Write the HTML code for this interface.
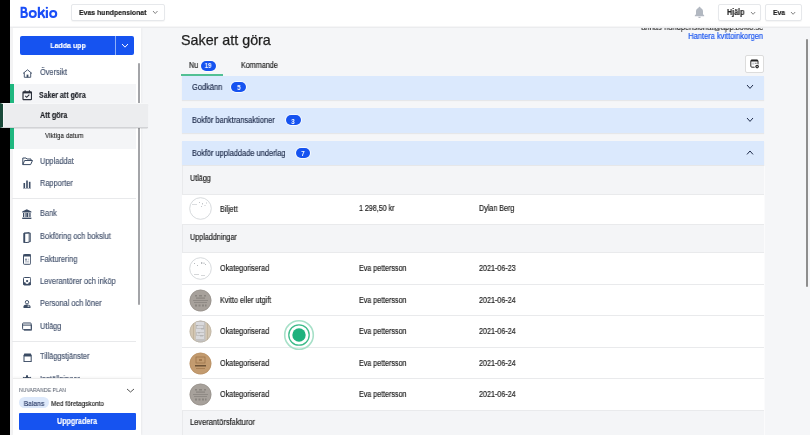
<!DOCTYPE html><html><head><meta charset="utf-8"><style>
html,body{margin:0;padding:0}
body{width:810px;height:435px;overflow:hidden;position:relative;background:#f5f6f8;font-family:"Liberation Sans",sans-serif}
.t{position:absolute;white-space:nowrap;will-change:transform}
.b{position:absolute;box-sizing:border-box}
</style></head><body>
<div class="t" style="right:46.90px;top:23.01px;font-size:8.625px;line-height:8.625px;color:#333;-webkit-text-stroke:0.18px #333;transform:scaleX(0.8696);transform-origin:100% 50%;">annas-hundpensionat@app.bokio.se</div>
<div class="t" style="right:46.90px;top:32.00px;font-size:8.625px;line-height:8.625px;color:#1653f0;-webkit-text-stroke:0.18px #1653f0;transform:scaleX(0.8696);transform-origin:100% 50%;">Hantera kvittoinkorgen</div>
<div class="t" style="left:181.40px;top:33.00px;font-size:14.300px;line-height:14.300px;color:#1e1e1e;transform-origin:0 50%;-webkit-text-stroke:0.25px #1e1e1e">Saker att göra</div>
<div class="t" style="left:189.00px;top:62.01px;font-size:8.165px;line-height:8.165px;color:#222;-webkit-text-stroke:0.18px #222;transform:scaleX(0.8696);transform-origin:0 50%;">Nu</div>
<div class="b" style="left:200.70px;top:60.50px;width:15.30px;height:10.10px;background:#1653f0;border-radius:5px;box-shadow:0 0 0 0.8px #fff"></div>
<div class="t" style="left:8.35px;width:400px;text-align:center;top:63.01px;font-size:6.900px;line-height:6.900px;color:#fff;font-weight:bold;-webkit-text-stroke:0.15px #fff;transform:scaleX(0.8696);transform-origin:50% 50%;-webkit-text-stroke:0">19</div>
<div class="t" style="left:240.80px;top:62.00px;font-size:8.280px;line-height:8.280px;color:#222;-webkit-text-stroke:0.18px #222;transform:scaleX(0.8696);transform-origin:0 50%;">Kommande</div>
<div class="b" style="left:181.40px;top:73.80px;width:41.90px;height:2.00px;background:#52c094"></div>
<div class="b" style="left:745.00px;top:55.00px;width:19.00px;height:18.30px;background:#fff;border:1px solid #dcdcdc;border-radius:2px"></div>
<svg class="b" style="left:749.50px;top:59.00px" width="11" height="11" viewBox="0 0 11 11"><rect x="0.8" y="1.1" width="7.2" height="7.1" rx="1" fill="none" stroke="#222" stroke-width="0.95"/><rect x="0.8" y="0.8" width="7.2" height="1.7" rx="0.6" fill="#222"/><rect x="2.2" y="3.6" width="2.2" height="2" fill="#c8cbd0"/><rect x="4.9" y="3.8" width="1.8" height="0.8" fill="#555"/><circle cx="7.1" cy="7.6" r="2.6" fill="#fff"/><circle cx="7.1" cy="7.6" r="1.8" fill="#222"/><circle cx="7.1" cy="7.6" r="0.6" fill="#fff"/></svg>
<div class="b" style="left:181.50px;top:76.00px;width:582.20px;height:24.00px;background:#dbe9fd;box-shadow:0 1px 1px rgba(0,0,0,0.06)"></div>
<div class="t" style="left:192.00px;top:83.00px;font-size:8.567px;line-height:8.567px;color:#1e2b4a;-webkit-text-stroke:0.18px #1e2b4a;transform:scaleX(0.8696);transform-origin:0 50%;">Godkänn</div>
<div class="b" style="left:231.20px;top:82.40px;width:14.80px;height:9.50px;background:#1653f0;border-radius:5px;box-shadow:0 0 0 0.8px #fff"></div>
<div class="t" style="left:38.60px;width:400px;text-align:center;top:85.00px;font-size:6.900px;line-height:6.900px;color:#fff;font-weight:bold;-webkit-text-stroke:0.15px #fff;transform:scaleX(0.8696);transform-origin:50% 50%;-webkit-text-stroke:0">5</div>
<svg class="b" style="left:746.00px;top:84.00px" width="8" height="5.4" viewBox="0 0 8 5.4"><polyline points="1,1 4.0,4.4 7,1" fill="none" stroke="#1e2b4a" stroke-width="1.0"/></svg>
<div class="b" style="left:181.50px;top:108.00px;width:582.20px;height:25.00px;background:#dbe9fd;box-shadow:0 1px 1px rgba(0,0,0,0.06)"></div>
<div class="t" style="left:192.00px;top:116.00px;font-size:8.567px;line-height:8.567px;color:#1e2b4a;-webkit-text-stroke:0.18px #1e2b4a;transform:scaleX(0.8696);transform-origin:0 50%;">Bokför banktransaktioner</div>
<div class="b" style="left:285.70px;top:115.40px;width:14.90px;height:9.50px;background:#1653f0;border-radius:5px;box-shadow:0 0 0 0.8px #fff"></div>
<div class="t" style="left:93.15px;width:400px;text-align:center;top:119.00px;font-size:6.900px;line-height:6.900px;color:#fff;font-weight:bold;-webkit-text-stroke:0.15px #fff;transform:scaleX(0.8696);transform-origin:50% 50%;-webkit-text-stroke:0">3</div>
<svg class="b" style="left:746.00px;top:117.00px" width="8" height="5.4" viewBox="0 0 8 5.4"><polyline points="1,1 4.0,4.4 7,1" fill="none" stroke="#1e2b4a" stroke-width="1.0"/></svg>
<div class="b" style="left:181.50px;top:141.30px;width:582.20px;height:24.20px;background:#dbe9fd;box-shadow:0 1px 1px rgba(0,0,0,0.06)"></div>
<div class="t" style="left:192.00px;top:149.00px;font-size:8.567px;line-height:8.567px;color:#1e2b4a;-webkit-text-stroke:0.18px #1e2b4a;transform:scaleX(0.8696);transform-origin:0 50%;">Bokför uppladdade underlag</div>
<div class="b" style="left:296.00px;top:148.20px;width:14.40px;height:9.50px;background:#1653f0;border-radius:5px;box-shadow:0 0 0 0.8px #fff"></div>
<div class="t" style="left:103.20px;width:400px;text-align:center;top:151.01px;font-size:6.900px;line-height:6.900px;color:#fff;font-weight:bold;-webkit-text-stroke:0.15px #fff;transform:scaleX(0.8696);transform-origin:50% 50%;-webkit-text-stroke:0">7</div>
<svg class="b" style="left:746.00px;top:149.80px" width="8" height="5.4" viewBox="0 0 8 5.4"><polyline points="1,4.4 4.0,1 7,4.4" fill="none" stroke="#1e2b4a" stroke-width="1.0"/></svg>
<div class="b" style="left:181.50px;top:165.50px;width:582.20px;height:269.50px;background:#f4f5f7;border-left:1px solid #e9eaec;box-shadow:1px 0 0 #fbfbfc"></div>
<div class="t" style="left:190.00px;top:175.01px;font-size:8.280px;line-height:8.280px;color:#222;-webkit-text-stroke:0.18px #222;transform:scaleX(0.8696);transform-origin:0 50%;">Utlägg</div>
<div class="b" style="left:181.50px;top:193.60px;width:582.20px;height:31.70px;background:#fff;border-bottom:1px solid #e9eaec;border-top:1px solid #e9eaec"></div>
<div class="t" style="left:220.30px;top:206.00px;font-size:8.280px;line-height:8.280px;color:#222;-webkit-text-stroke:0.18px #222;transform:scaleX(0.8696);transform-origin:0 50%;">Biljett</div>
<div class="t" style="left:359.40px;top:205.00px;font-size:8.165px;line-height:8.165px;color:#222;-webkit-text-stroke:0.18px #222;transform:scaleX(0.8696);transform-origin:0 50%;">1 298,50 kr</div>
<div class="t" style="left:478.90px;top:205.00px;font-size:8.223px;line-height:8.223px;color:#222;-webkit-text-stroke:0.18px #222;transform:scaleX(0.8696);transform-origin:0 50%;">Dylan Berg</div>
<svg class="b" style="left:189.30px;top:197.40px" width="23" height="23" viewBox="0 0 23 23"><circle cx="11.5" cy="11.5" r="10.8" fill="#fff" stroke="#cdd0d4" stroke-width="0.8"/><g fill="#c4c7cb"><rect x="3" y="7" width="5" height="0.6"/><rect x="10" y="5" width="1" height="1"/><rect x="13" y="6" width="1" height="1.5"/><rect x="15.5" y="8" width="1" height="1"/><rect x="12" y="9" width="1" height="1"/><rect x="17" y="5.5" width="1" height="1"/></g></svg>
<div class="t" style="left:190.00px;top:234.01px;font-size:8.280px;line-height:8.280px;color:#222;-webkit-text-stroke:0.18px #222;transform:scaleX(0.8696);transform-origin:0 50%;">Uppladdningar</div>
<div class="b" style="left:181.50px;top:252.40px;width:582.20px;height:32.46px;background:#fff;border-top:1px solid #e9eaec;border-bottom:1px solid #e9eaec"></div>
<svg class="b" style="left:189.30px;top:257.23px" width="23" height="23" viewBox="0 0 23 23"><circle cx="11.5" cy="11.5" r="10.8" fill="#fff" stroke="#cdd0d4" stroke-width="0.8"/><g fill="#b9bcc0"><rect x="5" y="6" width="1" height="1"/><rect x="8" y="8" width="1" height="1"/><rect x="12" y="5" width="1.3" height="2"/><rect x="14.5" y="5.5" width="1" height="1.5"/><rect x="16" y="7" width="1" height="1"/><rect x="5" y="17" width="5" height="0.6"/><rect x="12" y="18" width="4" height="0.6"/></g></svg>
<div class="t" style="left:220.30px;top:265.01px;font-size:8.280px;line-height:8.280px;color:#222;-webkit-text-stroke:0.18px #222;transform:scaleX(0.8696);transform-origin:0 50%;">Okategoriserad</div>
<div class="t" style="left:359.40px;top:265.01px;font-size:8.188px;line-height:8.188px;color:#222;-webkit-text-stroke:0.18px #222;transform:scaleX(0.8696);transform-origin:0 50%;">Eva pettersson</div>
<div class="t" style="left:478.90px;top:265.01px;font-size:8.257px;line-height:8.257px;color:#222;-webkit-text-stroke:0.18px #222;transform:scaleX(0.8696);transform-origin:0 50%;">2021-06-23</div>
<div class="b" style="left:181.50px;top:283.86px;width:582.20px;height:32.46px;background:#fff;border-top:1px solid #e9eaec;border-bottom:1px solid #e9eaec"></div>
<svg class="b" style="left:189.30px;top:288.69px" width="23" height="23" viewBox="0 0 23 23"><circle cx="11.5" cy="11.5" r="10.8" fill="#a7a19b"/><g fill="#8a8580"><rect x="6" y="6" width="2" height="1.5"/><rect x="10" y="6" width="3" height="1.5"/><rect x="15" y="6" width="2" height="1.5"/><rect x="7" y="8.5" width="9" height="1.2"/><rect x="4" y="11" width="15" height="0.8"/><rect x="5" y="13" width="13" height="0.8"/><rect x="6" y="15.5" width="2" height="2"/><rect x="9.5" y="15.5" width="2" height="2"/><rect x="13" y="15.5" width="2" height="2"/><rect x="16" y="15.5" width="1.5" height="2"/></g><circle cx="11.5" cy="11.5" r="10.6" fill="none" stroke="#8e8983" stroke-width="0.5"/></svg>
<div class="t" style="left:220.30px;top:297.02px;font-size:8.280px;line-height:8.280px;color:#222;-webkit-text-stroke:0.18px #222;transform:scaleX(0.8696);transform-origin:0 50%;">Kvitto eller utgift</div>
<div class="t" style="left:359.40px;top:297.00px;font-size:8.188px;line-height:8.188px;color:#222;-webkit-text-stroke:0.18px #222;transform:scaleX(0.8696);transform-origin:0 50%;">Eva pettersson</div>
<div class="t" style="left:478.90px;top:297.00px;font-size:8.257px;line-height:8.257px;color:#222;-webkit-text-stroke:0.18px #222;transform:scaleX(0.8696);transform-origin:0 50%;">2021-06-24</div>
<div class="b" style="left:181.50px;top:315.32px;width:582.20px;height:32.46px;background:#fff;border-top:1px solid #e9eaec;border-bottom:1px solid #e9eaec"></div>
<svg class="b" style="left:189.30px;top:320.15px" width="23" height="23" viewBox="0 0 23 23"><defs><clipPath id="c3"><circle cx="11.5" cy="11.5" r="10.8"/></clipPath></defs><g clip-path="url(#c3)"><rect width="23" height="23" fill="#d3c6b2"/><rect x="6.5" y="0" width="10" height="23" fill="#c3c2c2"/><g fill="#d9d9dc"><rect x="7" y="2" width="8" height="3"/><rect x="8" y="6" width="6" height="2"/><rect x="7" y="9" width="8" height="3"/><rect x="8" y="13" width="7" height="2"/><rect x="7" y="16" width="8" height="3"/></g><g fill="#a9a8a7"><rect x="7" y="5" width="2" height="0.8"/><rect x="12" y="8.5" width="3" height="0.8"/><rect x="9" y="12.5" width="2" height="0.8"/><rect x="11" y="15.5" width="3" height="0.8"/></g><rect x="4" y="0" width="1" height="23" fill="#c2b49e"/><rect x="18" y="0" width="1" height="23" fill="#c2b49e"/></g><circle cx="11.5" cy="11.5" r="10.6" fill="none" stroke="#b9b0a3" stroke-width="0.6"/></svg>
<div class="t" style="left:220.30px;top:328.01px;font-size:8.280px;line-height:8.280px;color:#222;-webkit-text-stroke:0.18px #222;transform:scaleX(0.8696);transform-origin:0 50%;">Okategoriserad</div>
<div class="t" style="left:359.40px;top:328.01px;font-size:8.188px;line-height:8.188px;color:#222;-webkit-text-stroke:0.18px #222;transform:scaleX(0.8696);transform-origin:0 50%;">Eva pettersson</div>
<div class="t" style="left:478.90px;top:328.01px;font-size:8.257px;line-height:8.257px;color:#222;-webkit-text-stroke:0.18px #222;transform:scaleX(0.8696);transform-origin:0 50%;">2021-06-24</div>
<div class="b" style="left:181.50px;top:346.78px;width:582.20px;height:32.46px;background:#fff;border-top:1px solid #e9eaec;border-bottom:1px solid #e9eaec"></div>
<svg class="b" style="left:189.30px;top:351.61px" width="23" height="23" viewBox="0 0 23 23"><circle cx="11.5" cy="11.5" r="10.8" fill="#c39b6f"/><g fill="#a37a4f"><rect x="7" y="5" width="9" height="6" fill="none" stroke="#9c744b" stroke-width="0.8"/><rect x="10" y="7" width="3" height="2"/><rect x="6" y="13" width="11" height="1.5" fill="#6d5236"/><rect x="7" y="16" width="9" height="0.8"/></g><circle cx="11.5" cy="11.5" r="10.6" fill="none" stroke="#b28a5e" stroke-width="0.5"/></svg>
<div class="t" style="left:220.30px;top:360.01px;font-size:8.280px;line-height:8.280px;color:#222;-webkit-text-stroke:0.18px #222;transform:scaleX(0.8696);transform-origin:0 50%;">Okategoriserad</div>
<div class="t" style="left:359.40px;top:360.01px;font-size:8.188px;line-height:8.188px;color:#222;-webkit-text-stroke:0.18px #222;transform:scaleX(0.8696);transform-origin:0 50%;">Eva pettersson</div>
<div class="t" style="left:478.90px;top:360.00px;font-size:8.257px;line-height:8.257px;color:#222;-webkit-text-stroke:0.18px #222;transform:scaleX(0.8696);transform-origin:0 50%;">2021-06-24</div>
<div class="b" style="left:181.50px;top:378.24px;width:582.20px;height:32.46px;background:#fff;border-top:1px solid #e9eaec;border-bottom:1px solid #e9eaec"></div>
<svg class="b" style="left:189.30px;top:383.07px" width="23" height="23" viewBox="0 0 23 23"><circle cx="11.5" cy="11.5" r="10.8" fill="#a7a19b"/><g fill="#8a8580"><rect x="6" y="6" width="2" height="1.5"/><rect x="10" y="6" width="3" height="1.5"/><rect x="15" y="6" width="2" height="1.5"/><rect x="7" y="8.5" width="9" height="1.2"/><rect x="4" y="11" width="15" height="0.8"/><rect x="5" y="13" width="13" height="0.8"/><rect x="6" y="15.5" width="2" height="2"/><rect x="9.5" y="15.5" width="2" height="2"/><rect x="13" y="15.5" width="2" height="2"/><rect x="16" y="15.5" width="1.5" height="2"/></g><circle cx="11.5" cy="11.5" r="10.6" fill="none" stroke="#8e8983" stroke-width="0.5"/></svg>
<div class="t" style="left:220.30px;top:391.00px;font-size:8.280px;line-height:8.280px;color:#222;-webkit-text-stroke:0.18px #222;transform:scaleX(0.8696);transform-origin:0 50%;">Okategoriserad</div>
<div class="t" style="left:359.40px;top:391.00px;font-size:8.188px;line-height:8.188px;color:#222;-webkit-text-stroke:0.18px #222;transform:scaleX(0.8696);transform-origin:0 50%;">Eva pettersson</div>
<div class="t" style="left:478.90px;top:391.01px;font-size:8.257px;line-height:8.257px;color:#222;-webkit-text-stroke:0.18px #222;transform:scaleX(0.8696);transform-origin:0 50%;">2021-06-24</div>
<div class="t" style="left:190.00px;top:418.00px;font-size:8.625px;line-height:8.625px;color:#222;-webkit-text-stroke:0.18px #222;transform:scaleX(0.8696);transform-origin:0 50%;">Leverantörsfakturor</div>
<div class="b" style="left:806.00px;top:39.20px;width:2.30px;height:247.80px;background:#8e8e8e;border-radius:1px"></div>
<svg class="b" style="left:283.40px;top:319.00px" width="32" height="32" viewBox="0 0 32 32"><circle cx="16" cy="16" r="14.3" fill="none" stroke="#a7e0c8" stroke-width="1.6"/><circle cx="16" cy="16" r="10.2" fill="none" stroke="#3dbb8a" stroke-width="1.3"/><circle cx="16" cy="16" r="6.7" fill="#1db27d"/></svg>
<div class="b" style="left:10.00px;top:0.00px;width:800.00px;height:26.00px;background:#fff"></div>
<div class="b" style="left:10.00px;top:26.00px;width:800.00px;height:1.00px;background:#f6f6f7"></div>
<svg class="b" style="left:0.00px;top:0.00px" width="70" height="26" viewBox="0 0 70 26"><g fill="none" stroke="#1a4ef7" stroke-width="2"><path d="M21.6 6.8V18M21.6 7.8H23.9A2.1 2.1 0 0 1 23.9 12H21.6M21.6 12H24.4A2.5 2.5 0 0 1 24.4 17H21.6"/></g><g fill="none" stroke="#1a4ef7" stroke-width="2.1"><circle cx="32.75" cy="13.95" r="3.0"/><circle cx="53.2" cy="13.95" r="3.0"/></g><rect x="37.8" y="6.8" width="2.15" height="11.2" fill="#1a4ef7"/><path d="M39.6 14.4 44.4 9.9M41.3 12.6 44.7 18" fill="none" stroke="#1a4ef7" stroke-width="2.2"/><rect x="45.75" y="10.1" width="2.2" height="7.9" fill="#1a4ef7"/><circle cx="46.85" cy="7.85" r="1.15" fill="#1a4ef7"/></svg>
<div class="b" style="left:71.00px;top:4.00px;width:94.00px;height:17.00px;background:#fff;border:1px solid #e6e8eb;border-radius:2px;box-shadow:0 1px 1px rgba(0,0,0,0.04)"></div>
<div class="t" style="left:79.30px;top:9.02px;font-size:7.958px;line-height:7.958px;color:#222;font-weight:bold;-webkit-text-stroke:0.15px #222;transform:scaleX(0.8696);transform-origin:0 50%;">Evas hundpensionat</div>
<svg class="b" style="left:152.00px;top:10.00px" width="6.5" height="4.5" viewBox="0 0 6.5 4.5"><polyline points="1,1 3.25,3.5 5.5,1" fill="none" stroke="#666" stroke-width="0.8"/></svg>
<svg class="b" style="left:694.00px;top:5.80px" width="11" height="12" viewBox="0 0 11 12"><path d="M5.5 0.8c-0.6 0-1 0.4-1 0.9v0.4C2.9 2.5 2 3.9 2 5.6v2.6L0.8 9.6v0.6h9.4V9.6L9 8.2V5.6C9 3.9 8.1 2.5 6.5 2.1V1.7c0-0.5-0.4-0.9-1-0.9z" fill="#b2b8c1"/><path d="M4.2 10.7h2.6a1.3 1.3 0 0 1-2.6 0z" fill="#b2b8c1"/></svg>
<div class="b" style="left:718.00px;top:4.00px;width:43.00px;height:17.00px;background:#fff;border:1px solid #e6e8eb;border-radius:2px;box-shadow:0 1px 1px rgba(0,0,0,0.04)"></div>
<div class="t" style="left:726.50px;top:9.01px;font-size:8.165px;line-height:8.165px;color:#222;font-weight:bold;-webkit-text-stroke:0.15px #222;transform:scaleX(0.8696);transform-origin:0 50%;">Hjälp</div>
<svg class="b" style="left:749.60px;top:10.50px" width="6.2" height="4.3" viewBox="0 0 6.2 4.3"><polyline points="1,1 3.1,3.3 5.2,1" fill="none" stroke="#666" stroke-width="0.8"/></svg>
<div class="b" style="left:765.00px;top:4.00px;width:37.00px;height:17.00px;background:#fff;border:1px solid #e6e8eb;border-radius:2px;box-shadow:0 1px 1px rgba(0,0,0,0.04)"></div>
<div class="t" style="left:772.80px;top:9.01px;font-size:7.820px;line-height:7.820px;color:#222;font-weight:bold;-webkit-text-stroke:0.15px #222;transform:scaleX(0.8696);transform-origin:0 50%;">Eva</div>
<svg class="b" style="left:789.80px;top:10.50px" width="6.2" height="4.3" viewBox="0 0 6.2 4.3"><polyline points="1,1 3.1,3.3 5.2,1" fill="none" stroke="#666" stroke-width="0.8"/></svg>
<div class="b" style="left:10.00px;top:28.00px;width:131.00px;height:407.00px;background:#fff;box-shadow:1px 0 2px rgba(0,0,0,0.04)"></div>
<div class="b" style="left:10.00px;top:27.00px;width:800.00px;height:1.00px;background:#ebecee"></div>
<div class="b" style="left:10.00px;top:28.00px;width:2.50px;height:407.00px;background:#f3f3f4"></div>
<div class="b" style="left:20.40px;top:36.40px;width:113.60px;height:18.30px;background:#1653f0;border-radius:2px"></div>
<div class="b" style="left:115.00px;top:36.40px;width:0.80px;height:18.30px;background:#8fb0f8"></div>
<div class="t" style="left:-132.30px;width:400px;text-align:center;top:42.01px;font-size:8.119px;line-height:8.119px;color:#fff;font-weight:bold;-webkit-text-stroke:0.15px #fff;transform:scaleX(0.8696);transform-origin:50% 50%;">Ladda upp</div>
<svg class="b" style="left:121.30px;top:43.00px" width="8" height="5.2" viewBox="0 0 8 5.2"><polyline points="1,1 4.0,4.2 7,1" fill="none" stroke="#fff" stroke-width="1.0"/></svg>
<div class="b" style="left:10.00px;top:84.00px;width:126.00px;height:64.70px;background:#f4f5f7"></div>
<div class="b" style="left:10.00px;top:84.00px;width:4.20px;height:64.70px;background:#1fb77f"></div>
<div class="t" style="left:39.80px;top:68.00px;font-size:8.510px;line-height:8.510px;color:#485670;-webkit-text-stroke:0.18px #485670;transform:scaleX(0.8696);transform-origin:0 50%;">Översikt</div>
<svg class="b" style="left:21.50px;top:68.50px" width="11" height="9" viewBox="0 0 11 9"><path d="M1 4.5 5.5 0.8 10 4.5M2.3 3.6V8.3H8.7V3.6" fill="none" stroke="#3b4b63" stroke-width="0.9"/><rect x="4.6" y="5.6" width="1.8" height="2.7" fill="#3b4b63"/></svg>
<div class="t" style="left:39.30px;top:91.01px;font-size:8.540px;line-height:8.540px;color:#1f2229;font-weight:bold;-webkit-text-stroke:0.15px #1f2229;transform:scaleX(0.8197);transform-origin:0 50%;">Saker att göra</div>
<svg class="b" style="left:21.80px;top:90.00px" width="10.5" height="10.5" viewBox="0 0 10.5 10.5"><rect x="1" y="1.8" width="8.5" height="7.9" rx="0.8" fill="none" stroke="#2a2f3a" stroke-width="1.2"/><rect x="1" y="1.8" width="8.5" height="1.6" fill="#2a2f3a"/><rect x="2.6" y="0.2" width="1" height="2" fill="#2a2f3a"/><rect x="6.9" y="0.2" width="1" height="2" fill="#2a2f3a"/><polyline points="3.2,5.9 4.7,7.3 7.3,4.6" fill="none" stroke="#2a2f3a" stroke-width="1.1"/></svg>
<div class="t" style="left:45.40px;top:132.01px;font-size:7.668px;line-height:7.668px;color:#222;-webkit-text-stroke:0.18px #222;transform:scaleX(0.8333);transform-origin:0 50%;-webkit-text-stroke:0.12px #222">Viktiga datum</div>
<div class="t" style="left:39.80px;top:157.00px;font-size:8.510px;line-height:8.510px;color:#485670;-webkit-text-stroke:0.18px #485670;transform:scaleX(0.8696);transform-origin:0 50%;">Uppladdat</div>
<svg class="b" style="left:21.50px;top:157.00px" width="11" height="8.5" viewBox="0 0 11 8.5"><path d="M0.8 7.6V1h3.2l1 1h4v1.5M0.8 7.6h7.8l1.9-4.1H2.6z" fill="none" stroke="#3b4b63" stroke-width="1" stroke-linejoin="round"/></svg>
<div class="t" style="left:39.80px;top:179.00px;font-size:8.510px;line-height:8.510px;color:#485670;-webkit-text-stroke:0.18px #485670;transform:scaleX(0.8696);transform-origin:0 50%;">Rapporter</div>
<svg class="b" style="left:22.80px;top:179.80px" width="8.2" height="9" viewBox="0 0 8.2 9"><rect x="0.5" y="3" width="1.6" height="5" fill="#3b4b63"/><rect x="3.2" y="0.5" width="1.6" height="7.5" fill="#3b4b63"/><rect x="5.9" y="1.8" width="1.6" height="6.2" fill="#3b4b63"/><rect x="0" y="8.2" width="8.2" height="0.8" fill="#9aa3b0"/></svg>
<div class="b" style="left:12.20px;top:198.00px;width:123.80px;height:1.00px;background:#e8e9eb"></div>
<div class="t" style="left:39.80px;top:209.00px;font-size:8.510px;line-height:8.510px;color:#485670;-webkit-text-stroke:0.18px #485670;transform:scaleX(0.8696);transform-origin:0 50%;">Bank</div>
<svg class="b" style="left:22.30px;top:209.00px" width="9.6" height="10.2" viewBox="0 0 9.6 10.2"><path d="M4.8 0.3 9.4 2.6V3.4H0.2V2.6z" fill="#3b4b63"/><rect x="1" y="4" width="1.3" height="4" fill="#3b4b63"/><rect x="3.4" y="4" width="1.3" height="4" fill="#3b4b63"/><rect x="5.0" y="4" width="1.3" height="4" fill="#3b4b63"/><rect x="7.3" y="4" width="1.3" height="4" fill="#3b4b63"/><rect x="0.2" y="8.6" width="9.2" height="1.4" fill="#3b4b63"/></svg>
<div class="t" style="left:39.80px;top:232.01px;font-size:8.510px;line-height:8.510px;color:#485670;-webkit-text-stroke:0.18px #485670;transform:scaleX(0.8696);transform-origin:0 50%;">Bokföring och bokslut</div>
<svg class="b" style="left:22.60px;top:231.50px" width="8.4" height="11.2" viewBox="0 0 8.4 11.2"><path d="M1 1.2 6.2 0.6V10.2L1 10.8z" fill="none" stroke="#3b4b63" stroke-width="1"/><path d="M1 1.2H7.6V9.6H6.2" fill="none" stroke="#3b4b63" stroke-width="0.8"/><rect x="0.6" y="1" width="1.6" height="9.7" fill="#3b4b63"/></svg>
<div class="t" style="left:39.80px;top:255.00px;font-size:8.510px;line-height:8.510px;color:#485670;-webkit-text-stroke:0.18px #485670;transform:scaleX(0.8696);transform-origin:0 50%;">Fakturering</div>
<svg class="b" style="left:22.80px;top:254.00px" width="8.2" height="10.8" viewBox="0 0 8.2 10.8"><rect x="0.5" y="0.5" width="7.2" height="9.8" rx="0.8" fill="none" stroke="#3b4b63" stroke-width="1"/><rect x="0.5" y="0.5" width="7.2" height="2" fill="#3b4b63"/><rect x="2" y="4.6" width="2" height="2" fill="#8892a2"/><rect x="4.7" y="4.6" width="1.5" height="2" fill="#c4cad3"/><rect x="2" y="7.5" width="4.2" height="0.8" fill="#8892a2"/></svg>
<div class="t" style="left:39.80px;top:277.00px;font-size:8.510px;line-height:8.510px;color:#485670;-webkit-text-stroke:0.18px #485670;transform:scaleX(0.8696);transform-origin:0 50%;">Leverantörer och inköp</div>
<svg class="b" style="left:22.80px;top:277.00px" width="8.2" height="8.5" viewBox="0 0 8.2 8.5"><rect x="0.5" y="0.5" width="7.2" height="7.5" rx="0.9" fill="none" stroke="#3b4b63" stroke-width="1"/><path d="M0.5 5.2h1.8a1.8 1.8 0 0 0 3.6 0h1.8V8H0.5z" fill="#3b4b63"/><circle cx="4.1" cy="4.1" r="1.1" fill="#3b4b63"/></svg>
<div class="t" style="left:39.80px;top:299.00px;font-size:8.510px;line-height:8.510px;color:#485670;-webkit-text-stroke:0.18px #485670;transform:scaleX(0.8696);transform-origin:0 50%;">Personal och löner</div>
<svg class="b" style="left:22.80px;top:300.00px" width="8" height="8.5" viewBox="0 0 8 8.5"><circle cx="4" cy="2.2" r="1.7" fill="none" stroke="#3b4b63" stroke-width="0.9"/><path d="M0.5 8V6.4C0.5 5.1 1.8 4.4 4 4.4S7.5 5.1 7.5 6.4V8z" fill="#3b4b63"/><rect x="4.6" y="5.6" width="1.8" height="1" fill="#fff"/></svg>
<div class="t" style="left:39.80px;top:322.01px;font-size:8.510px;line-height:8.510px;color:#485670;-webkit-text-stroke:0.18px #485670;transform:scaleX(0.8696);transform-origin:0 50%;">Utlägg</div>
<svg class="b" style="left:22.00px;top:322.30px" width="10" height="8.8" viewBox="0 0 10 8.8"><rect x="0.6" y="1" width="8.6" height="6.6" rx="0.8" fill="none" stroke="#3b4b63" stroke-width="1"/><rect x="0.6" y="2.6" width="8.6" height="1" fill="#3b4b63"/><path d="M2 8.2H9.6V3" fill="none" stroke="#3b4b63" stroke-width="0.9"/></svg>
<div class="b" style="left:12.20px;top:341.00px;width:123.80px;height:1.00px;background:#e8e9eb"></div>
<div class="t" style="left:39.80px;top:352.00px;font-size:8.510px;line-height:8.510px;color:#485670;-webkit-text-stroke:0.18px #485670;transform:scaleX(0.8696);transform-origin:0 50%;">Tilläggstjänster</div>
<svg class="b" style="left:22.50px;top:352.60px" width="9.2" height="9.2" viewBox="0 0 9.2 9.2"><path d="M1.3 0.6H7.9L8.8 3H0.4z" fill="#3b4b63"/><rect x="1" y="3" width="7.2" height="5.6" fill="none" stroke="#3b4b63" stroke-width="1"/></svg>
<div class="t" style="left:39.80px;top:375.00px;font-size:8.510px;line-height:8.510px;color:#485670;-webkit-text-stroke:0.18px #485670;transform:scaleX(0.8696);transform-origin:0 50%;">Inställningar</div>
<svg class="b" style="left:22.00px;top:375.30px" width="10" height="10" viewBox="0 0 10 10"><g transform="translate(5 5)"><circle r="3.3" fill="#3b4b63"/><g fill="#3b4b63"><rect x="-1" y="-4.7" width="2" height="9.4"/><rect x="-1" y="-4.7" width="2" height="9.4" transform="rotate(60)"/><rect x="-1" y="-4.7" width="2" height="9.4" transform="rotate(120)"/></g><circle r="1.4" fill="#fff"/></g></svg>
<div class="b" style="left:137.80px;top:62.80px;width:2.20px;height:242.70px;background:#a3a4a8;border-radius:1px"></div>
<div class="b" style="left:12.50px;top:377.60px;width:128.50px;height:57.40px;background:#fff;border-top:1px solid #ececec;box-shadow:0 -1px 2px rgba(0,0,0,0.04)"></div>
<div class="t" style="left:19.00px;top:388.00px;font-size:5.945px;line-height:5.945px;color:#5a6270;-webkit-text-stroke:0.18px #5a6270;transform:scaleX(0.8696);transform-origin:0 50%;-webkit-text-stroke:0.05px #5a6270">NUVARANDE PLAN</div>
<svg class="b" style="left:126.20px;top:387.60px" width="9" height="5.0" viewBox="0 0 9 5.0"><polyline points="1,1 4.5,4.0 8,1" fill="none" stroke="#444" stroke-width="0.9"/></svg>
<div class="b" style="left:19.00px;top:396.60px;width:29.60px;height:11.30px;background:#dde9fb;border-radius:6px"></div>
<div class="t" style="left:-166.20px;width:400px;text-align:center;top:400.00px;font-size:7.705px;line-height:7.705px;color:#2a3a66;-webkit-text-stroke:0.18px #2a3a66;transform:scaleX(0.8696);transform-origin:50% 50%;">Balans</div>
<div class="t" style="left:51.00px;top:400.01px;font-size:7.360px;line-height:7.360px;color:#222;-webkit-text-stroke:0.18px #222;transform:scaleX(0.8696);transform-origin:0 50%;">Med företagskonto</div>
<div class="b" style="left:19.00px;top:412.90px;width:116.60px;height:16.80px;background:#1653f0;border-radius:1px"></div>
<div class="t" style="left:-122.70px;width:400px;text-align:center;top:418.00px;font-size:8.199px;line-height:8.199px;color:#fff;font-weight:bold;-webkit-text-stroke:0.15px #fff;transform:scaleX(0.8696);transform-origin:50% 50%;">Uppgradera</div>
<div class="b" style="left:0.00px;top:103.00px;width:148.00px;height:25.20px;background:#ecedef;border-left:3px solid #1a4a3a;border-bottom:1px solid #d2d3d6;border-top:0.6px solid #f7f8f9;box-shadow:0 0.5px 1px rgba(0,0,0,0.08)"></div>
<div class="b" style="left:3.00px;top:103.00px;width:1.00px;height:24.20px;background:#f7f7f7"></div>
<div class="t" style="left:39.60px;top:111.01px;font-size:8.723px;line-height:8.723px;color:#1b1d22;font-weight:bold;-webkit-text-stroke:0.15px #1b1d22;transform:scaleX(0.8197);transform-origin:0 50%;">Att göra</div>
<div class="b" style="left:0.00px;top:0.00px;width:10.00px;height:103.00px;background:#000"></div>
<div class="b" style="left:0.00px;top:128.20px;width:10.00px;height:306.80px;background:#000"></div>
</body></html>
